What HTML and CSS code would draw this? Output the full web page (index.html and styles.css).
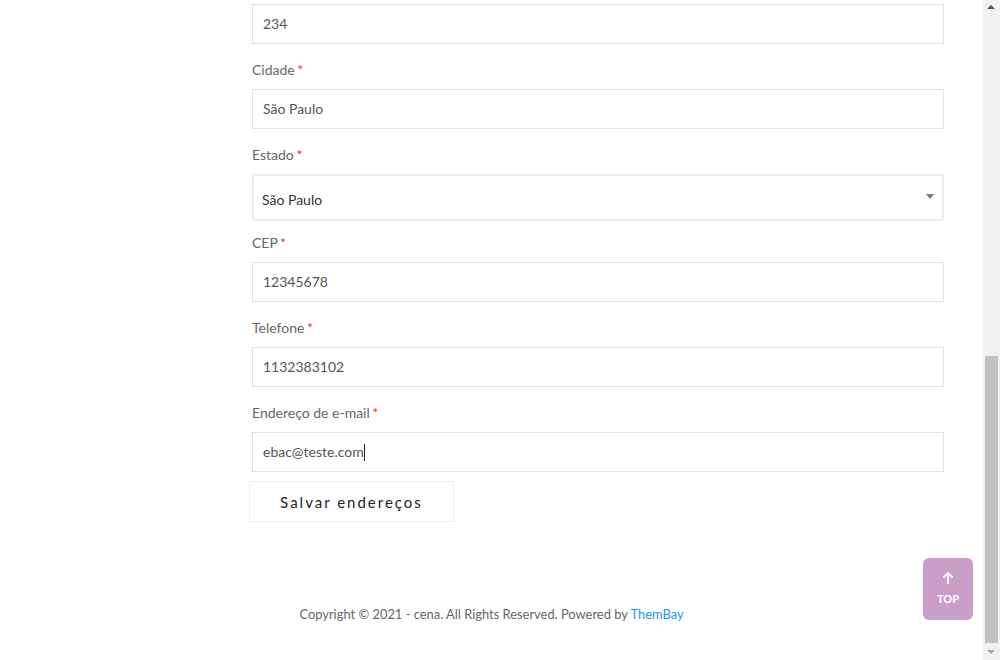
FILE: index.html
```html
<!DOCTYPE html>
<html lang="pt-BR">
<head>
<meta charset="utf-8">
<title>Endereço</title>
<link rel="stylesheet" href="styles.css">
</head>
<body>
<div class="page">
  <form class="form">
    <div class="field first">
      <div class="input">234</div>
    </div>
    <div class="field">
      <label class="label">Cidade <span class="req">*</span></label>
      <div class="input">São Paulo</div>
    </div>
    <div class="field">
      <label class="label">Estado <span class="req">*</span></label>
      <div class="select"><span class="select-text">São Paulo</span><span class="caret"></span></div>
    </div>
    <div class="field after-select">
      <label class="label">CEP <span class="req">*</span></label>
      <div class="input">12345678</div>
    </div>
    <div class="field">
      <label class="label">Telefone <span class="req">*</span></label>
      <div class="input">1132383102</div>
    </div>
    <div class="field">
      <label class="label">Endereço de e-mail <span class="req">*</span></label>
      <div class="input">ebac@teste.com<span class="cursor"></span></div>
    </div>
    <div class="actions">
      <button type="button" class="btn">Salvar endereços</button>
    </div>
  </form>
  <footer class="footer">Copyright © 2021 - cena. All Rights Reserved. Powered by <a class="link" href="#">ThemBay</a></footer>
  <a class="top" href="#">
    <svg width="12" height="14" viewBox="0 0 12 14" aria-hidden="true"><path d="M6 13V2M1.5 6.5L6 2l4.5 4.5" fill="none" stroke="#fff" stroke-width="1.8"/></svg>
    <span class="top-text">TOP</span>
  </a>
</div>
<div class="scrollbar">
  <span class="sb-up"></span>
  <div class="sb-track"><div class="sb-thumb"></div></div>
  <span class="sb-down"></span>
</div>
</body>
</html>
```

FILE: styles.css
```css
html, body {
  margin: 0;
  padding: 0;
  height: 660px;
  overflow: hidden;
  background: #fff;
}
body {
  display: flex;
  font-family: Lato, "Open Sans", Arial, sans-serif;
  color: #666;
}
.page {
  flex: 1;
  position: relative;
  display: flex;
  flex-direction: column;
}
.form {
  padding: 4px 0 0 252px;
  width: 692px;
  margin: 0;
}
.field {
  margin-top: 15px;
}
.field.first {
  margin-top: 0;
}
.field.after-select {
  margin-top: 11px;
}
.label {
  display: block;
  font-size: 14px;
  line-height: 22px;
  margin-bottom: 8px;
  color: #666;
}
.req {
  color: #e2401c;
  margin-left: -1px;
}
.input {
  box-sizing: border-box;
  height: 40px;
  border: 1px solid #e1e1e1;
  padding: 0 10px;
  font-size: 14px;
  line-height: 38px;
  color: #555;
  display: flex;
  align-items: center;
}
.cursor {
  display: inline-block;
  width: 1px;
  height: 17px;
  background: #222;
}
.select {
  box-sizing: border-box;
  height: 47px;
  margin-top: 1px;
  border: 2px solid #ededed;
  border-radius: 3px;
  padding: 0 8px;
  font-size: 14px;
  color: #333;
  display: flex;
  align-items: center;
  justify-content: space-between;
}
.select-text {
  padding-top: 4px;
}
.caret {
  width: 0;
  height: 0;
  border-left: 4px solid transparent;
  border-right: 4px solid transparent;
  border-top: 5px solid #777;
  margin-top: -2px;
}
.actions {
  margin-top: 9px;
  margin-left: -3px;
}
.btn {
  box-sizing: border-box;
  width: 205px;
  height: 41px;
  background: #fff;
  border: 1px solid #efefef;
  font-family: Lato, Arial, sans-serif;
  font-size: 15px;
  letter-spacing: 2px;
  color: #222;
  padding: 0;
}
.footer {
  margin-top: 82px;
  text-align: center;
  font-size: 12.9px;
  line-height: 20px;
  color: #666;
}
.link {
  color: #1e90ff;
  text-decoration: none;
}
.top {
  position: absolute;
  left: 923px;
  top: 558px;
  width: 50px;
  height: 62px;
  box-sizing: border-box;
  padding-bottom: 3px;
  border-radius: 6px;
  background: #c99fc9;
  display: flex;
  flex-direction: column;
  align-items: center;
  justify-content: center;
  gap: 8px;
  text-decoration: none;
}
.top svg {
  display: block;
}
.top-text {
  color: #fff;
  font-size: 11px;
  font-weight: 700;
  line-height: 12px;
}
.scrollbar {
  width: 17px;
  background: #f1f1f1;
  display: flex;
  flex-direction: column;
  align-items: center;
}
.sb-up, .sb-down {
  flex: none;
  height: 17px;
  width: 17px;
  position: relative;
}
.sb-up::after, .sb-down::after {
  content: "";
  position: absolute;
  left: 4px;
  width: 0;
  height: 0;
  border-left: 4px solid transparent;
  border-right: 4px solid transparent;
}
.sb-up::after {
  top: 5px;
  border-bottom: 4px solid #505050;
}
.sb-down::after {
  top: 7px;
  border-top: 4px solid #a3a3a3;
}
.sb-track {
  flex: 1;
  width: 100%;
  display: flex;
  flex-direction: column;
  justify-content: flex-end;
  align-items: center;
}
.sb-thumb {
  width: 13px;
  height: 287px;
  background: #c1c1c1;
}
```
